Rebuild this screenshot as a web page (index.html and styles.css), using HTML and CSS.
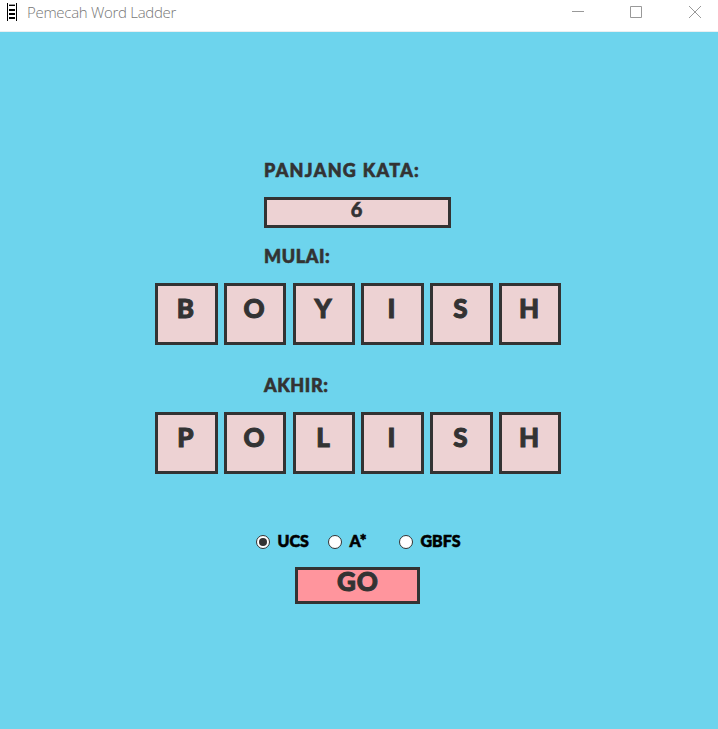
FILE: index.html
```html
<!DOCTYPE html>
<html lang="id">
<head>
<meta charset="utf-8">
<title>Pemecah Word Ladder</title>
<link rel="stylesheet" href="styles.css">
</head>
<body>
<header class="titlebar">
  <svg class="app-icon" width="10" height="18" viewBox="0 0 10 18" shape-rendering="crispEdges"><path d="M0 0h1v18H0zM9 0h1v18H9zM2 2h6v1H2zM2 6h6v2H2zM2 10h6v2H2zM2 14h6v2H2z"/><path d="M2 1h6v1H2z" fill="#999"/></svg>
  <h1 class="title">Pemecah Word Ladder</h1>
  <div class="controls">
    <svg width="12" height="12" viewBox="0 0 12 12"><path d="M0 5.5h12"/></svg>
    <svg width="12" height="12" viewBox="0 0 12 12"><path d="M.5.5h11v11H.5z"/></svg>
    <svg width="12" height="12" viewBox="0 0 12 12"><path d="M0 0l12 12M12 0L0 12"/></svg>
  </div>
</header>
<main class="board">
  <div class="label length-label">PANJANG KATA:</div>
  <div class="field">6</div>
  <div class="label start-label">MULAI:</div>
  <div class="tiles">
    <span class="tile wide">B</span><span class="tile round">O</span><span class="tile">Y</span><span class="tile wide">I</span><span class="tile wide">S</span><span class="tile">H</span>
  </div>
  <div class="label end-label">AKHIR:</div>
  <div class="tiles">
    <span class="tile wide">P</span><span class="tile round">O</span><span class="tile">L</span><span class="tile wide">I</span><span class="tile wide">S</span><span class="tile">H</span>
  </div>
  <div class="options">
    <label class="option"><span class="radio checked"></span><span>UCS</span></label>
    <label class="option"><span class="radio"></span><span>A*</span></label>
    <label class="option"><span class="radio"></span><span>GBFS</span></label>
  </div>
  <button class="go">GO</button>
</main>
</body>
</html>
```
FILE: styles.css
```css
* { box-sizing: border-box; }
body {
  margin: 0;
  height: 729px;
  overflow: hidden;
  background: #6dd4ed;
  color: #333;
  font-family: Lato, "Liberation Sans", sans-serif;
  font-weight: 900;
}
.titlebar {
  display: flex;
  height: 32px;
  padding: 3px 17px 0 7px;
  background: #fff;
  border-bottom: 1px solid #e9eff1;
}
.title {
  margin: -1px 0 0 10px;
  font: 300 15px/20px "Open Sans", sans-serif;
  letter-spacing: -0.3px;
  color: #777;
}
.controls { display: flex; gap: 47px; margin: 3px 0 0 auto; }
.controls svg { fill: none; stroke: #999; stroke-width: 1; }
.controls svg:first-child { margin-right: -1px; }
.board { padding-top: 128px; -webkit-text-stroke: 0.6px; }
.label {
  margin-left: 264px;
  height: 20px;
  font-size: 18px;
  line-height: 20px;
  letter-spacing: 0.6px;
  white-space: nowrap;
}
.length-label { letter-spacing: 1.3px; }
.field {
  width: 187px;
  height: 31px;
  margin: 17px 0 18px 264px;
  padding-right: 2px;
  border: 3px solid #333;
  background: #edd2d3;
  font-size: 20px;
  line-height: 18px;
  text-align: center;
}
.tiles {
  display: grid;
  grid-template-columns: 69px 69px 68px 69px 69px 62px;
  margin: 17px 0 0 155px;
}
.tile {
  width: 62px;
  height: 62px;
  padding-right: 2px;
  border: 3px solid #333;
  background: #edd2d3;
  font-size: 26px;
  line-height: 45px;
  text-align: center;
  -webkit-text-stroke: 1px;
}
.wide { width: 63px; }
.end-label { margin-top: 30px; }
.options {
  display: grid;
  grid-template-columns: 72px 71px 80px;
  margin: 57px 0 0 256px;
  color: #000;
  font-size: 16px;
  line-height: 19px;
}
.option { display: flex; height: 20px; }
.radio {
  display: grid;
  place-items: center;
  width: 14px;
  height: 14px;
  margin: 4px 8px 0 0;
  border: 1px solid #333;
  border-radius: 50%;
  background: #fff;
}
.radio + span { margin-left: -0.5px; }
.checked::after {
  content: "";
  width: 8px;
  height: 8px;
  border-radius: 50%;
  background: #333;
}
.go {
  display: block;
  width: 125px;
  height: 37px;
  margin: 16px 0 0 295px;
  padding: 0 0 8px 1px;
  border: 3px solid #333;
  border-radius: 0;
  background: #ff959d;
  color: #333;
  font: inherit;
  font-size: 26px;
  line-height: 21px;
  letter-spacing: 1px;
  -webkit-text-stroke: 1px;
}
```
